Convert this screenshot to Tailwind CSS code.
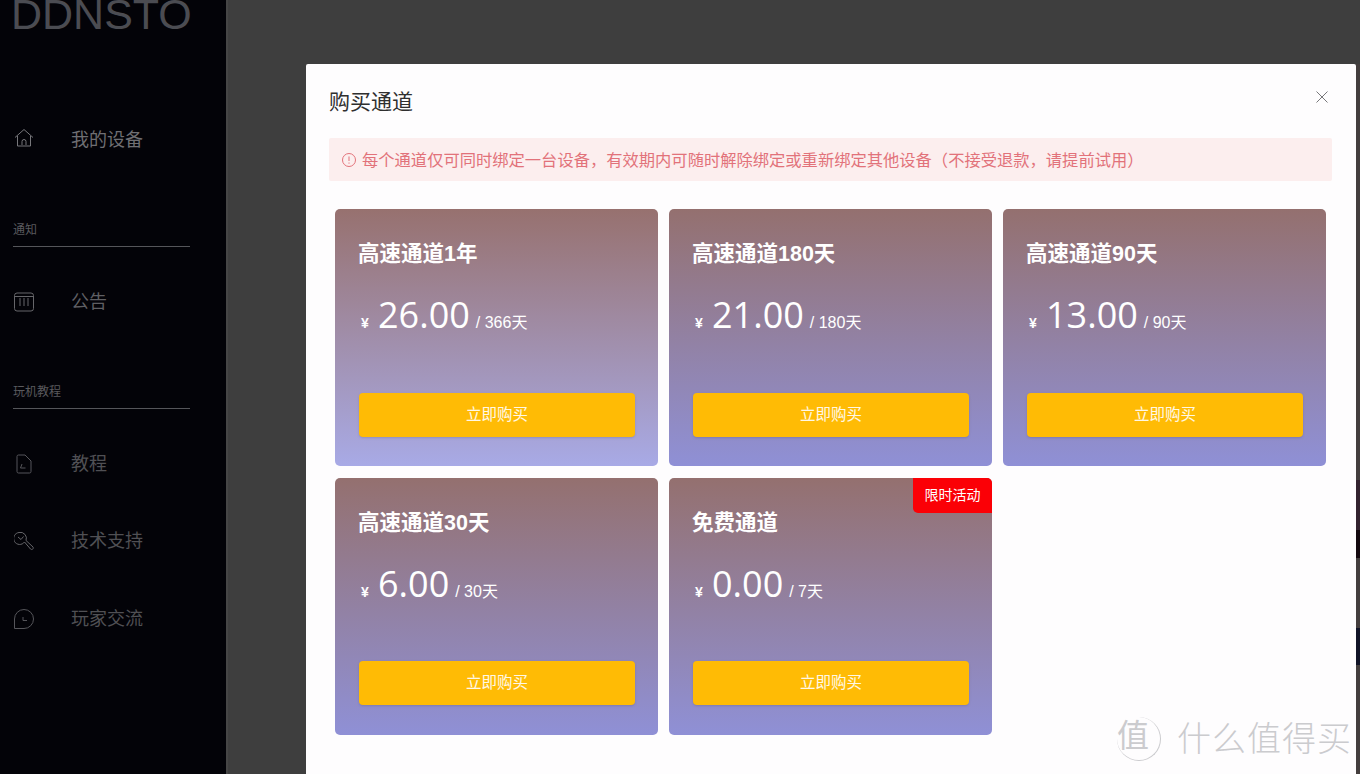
<!DOCTYPE html>
<html lang="zh-CN">
  <head>
    <meta charset="UTF-8" />
    <title>DDNSTO</title>
    <script src="https://cdn.jsdelivr.net/npm/@tailwindcss/browser@4"></script>
  </head>
  <body class="h-screen overflow-hidden bg-[#3e3e3e] font-['Liberation_Sans','Noto_Sans_CJK_SC',sans-serif]">
    <div class="flex h-[774px]">
      <!-- sidebar -->
      <aside class="w-[226px] shrink-0 bg-[#030308] pl-[13px] pr-9 text-[#5b5b60]">
        <div class="h-[30px] -mt-[9px] -ml-[2px] text-[43px] leading-[46px] text-[#4b4c52] whitespace-nowrap">DDNSTO</div>

        <div class="mt-[94px] flex h-[50px] items-center">
          <svg class="w-5 h-5 mb-[4px] mr-[37px] ml-[1px] shrink-0" viewBox="0 0 20 20" fill="none" stroke="#77777b" stroke-width="1">
            <path d="M1 9.500 10 1.500l9 8M3.500 8v10h13V8M8 17v-3.500a2 2 0 0 1 4 0V17" />
          </svg>
          <span class="text-[18px] text-[#6f6f73]">我的设备</span>
        </div>

        <div class="mt-[53px] h-[29px] pt-[2px] border-b border-[#55565a] text-[12px] leading-[20px] text-[#5a5a5e]">通知</div>

        <div class="mt-[30px] flex h-[50px] items-center">
          <svg class="w-5 h-5 mr-[37px] ml-[1px] shrink-0" viewBox="0 0 20 20" fill="none" stroke="#66666a" stroke-width="1">
            <rect x="0.5" y="1" width="19" height="18" rx="2.500" />
            <path d="M6 6v8M10 6v8M14 6v8M1 4.500h18" />
          </svg>
          <span class="text-[18px] text-[#5f5f63]">公告</span>
        </div>

        <div class="mt-[53px] h-[29px] pt-[2px] border-b border-[#55565a] text-[12px] leading-[20px] text-[#5a5a5e]">玩机教程</div>

        <div class="mt-[30px] flex h-[50px] items-center">
          <svg class="w-5 h-5 mr-[37px] ml-[1px] shrink-0" viewBox="0 0 20 20" fill="none" stroke="#55555a" stroke-width="1">
            <path d="M3 2.500a1.500 1.500 0 0 1 1.500-1.500H11l6 6v10.500a1.500 1.500 0 0 1-1.500 1.500h-11A1.500 1.500 0 0 1 3 17.500zM8 10l-1.500 4h5" />
          </svg>
          <span class="text-[18px] text-[#505054]">教程</span>
        </div>

        <div class="mt-[27px] flex h-[50px] items-center">
          <svg class="w-5 h-5 mr-[37px] ml-[1px] shrink-0" viewBox="0 0 20 20" fill="none" stroke="#66666a" stroke-width="1">
            <path d="M5 1.500a6 6 0 1 0 5.500 9.500l6 7c1.500 1.500 3.500-.5 2.500-2l-7-6.500A6 6 0 0 0 5 1.500ZM4 6l3 2.500 2.500-3" />
          </svg>
          <span class="text-[18px] text-[#505054]">技术支持</span>
        </div>

        <div class="mt-[28px] flex h-[50px] items-center">
          <svg class="w-5 h-5 mr-[37px] ml-[1px] shrink-0" viewBox="0 0 20 20" fill="none" stroke="#55555a" stroke-width="1">
            <path d="M10 .5a9.500 9.500 0 1 1 0 19H.5V10A9.500 9.500 0 0 1 10 .5ZM9 8v3.500h4" />
          </svg>
          <span class="text-[18px] text-[#505054]">玩家交流</span>
        </div>
      </aside>

      <main class="flex-1 relative border-l-2 border-[#464646]">
        <!-- right edge of the page behind the dialog -->
        <div class="absolute right-0 top-[64px] w-1 h-[710px] bg-[#443e3e]"></div>
        <div class="absolute right-0 top-[480px] w-1 h-[50px] bg-[#33232f]"></div>
        <div class="absolute right-0 top-[530px] w-1 h-[28px] bg-[#14090f]"></div>
        <div class="absolute right-0 top-[628px] w-1 h-[37px] bg-[#111427]"></div>

        <!-- dialog -->
        <div class="absolute left-[78px] top-[64px] w-[1050px] h-[720px] bg-[#fefdfe] rounded-t-[2px] pl-[23px] pr-6">
          <div class="h-[74px] flex items-center justify-between">
            <h2 class="text-[21px] text-[#2f2f2f] mt-[2px]">购买通道</h2>
            <svg class="w-3 h-3 mr-1 mb-[8px]" viewBox="0 0 12 12" fill="none" stroke="#77777a" stroke-width="1">
              <path d="M.5.5 11.500 11.500M11.500.5 .5 11.500" />
            </svg>
          </div>

          <div class="h-[43px] bg-[#fceeee] rounded-[2px] flex items-center px-[13px] pt-[1px] text-[#e2727a] text-[16.3px] whitespace-nowrap">
            <svg class="w-[14px] h-[14px] mr-[6px] shrink-0" viewBox="0 0 14 14" fill="none" stroke="#e2727a" stroke-width="1">
              <circle cx="7" cy="7" r="6.500" />
              <path d="M7 3.500v4.500M7 9.500v1.200" />
            </svg>
            每个通道仅可同时绑定一台设备，有效期内可随时解除绑定或重新绑定其他设备（不接受退款，请提前试用）
          </div>

          <div class="mt-[28px] px-[6px] grid grid-cols-[323px_323px_323px] gap-x-[11px] gap-y-[12px]">
            <!-- card 1 -->
            <div class="relative h-[257px] rounded-[5px] bg-gradient-to-b from-[#97716f] to-[#a8aae6] p-6 text-white">
              <h3 class="text-[21.5px] leading-[30px] font-bold mt-[6px] -ml-[1px]">高速通道1年</h3>
              <p class="mt-[22px] flex items-baseline h-[48px] whitespace-nowrap">
                <span class="text-[14px] font-bold w-[19px] pl-[2px]">¥</span>
                <span class="text-[36px] leading-[48px] font-['Open_Sans','Liberation_Sans',sans-serif]">26.00</span>
                <span class="text-[16px] ml-[6px]">/ 366天</span>
              </p>
              <button class="mt-[54px] w-[276px] h-[44px] rounded-[4px] bg-[#ffbb05] text-[15.5px] text-white/90 shadow-sm">立即购买</button>
            </div>
            <!-- card 2 -->
            <div class="relative h-[257px] rounded-[5px] bg-gradient-to-b from-[#94706f] to-[#8f90d6] p-6 text-white">
              <h3 class="text-[21.5px] leading-[30px] font-bold mt-[6px] -ml-[1px]">高速通道180天</h3>
              <p class="mt-[22px] flex items-baseline h-[48px] whitespace-nowrap">
                <span class="text-[14px] font-bold w-[19px] pl-[2px]">¥</span>
                <span class="text-[36px] leading-[48px] font-['Open_Sans','Liberation_Sans',sans-serif]">21.00</span>
                <span class="text-[16px] ml-[6px]">/ 180天</span>
              </p>
              <button class="mt-[54px] w-[276px] h-[44px] rounded-[4px] bg-[#ffbb05] text-[15.5px] text-white/90 shadow-sm">立即购买</button>
            </div>
            <!-- card 3 -->
            <div class="relative h-[257px] rounded-[5px] bg-gradient-to-b from-[#94706f] to-[#8f90d6] p-6 text-white">
              <h3 class="text-[21.5px] leading-[30px] font-bold mt-[6px] -ml-[1px]">高速通道90天</h3>
              <p class="mt-[22px] flex items-baseline h-[48px] whitespace-nowrap">
                <span class="text-[14px] font-bold w-[19px] pl-[2px]">¥</span>
                <span class="text-[36px] leading-[48px] font-['Open_Sans','Liberation_Sans',sans-serif]">13.00</span>
                <span class="text-[16px] ml-[6px]">/ 90天</span>
              </p>
              <button class="mt-[54px] w-[276px] h-[44px] rounded-[4px] bg-[#ffbb05] text-[15.5px] text-white/90 shadow-sm">立即购买</button>
            </div>
            <!-- card 4 -->
            <div class="relative h-[257px] rounded-[5px] bg-gradient-to-b from-[#94706f] to-[#8f90d6] p-6 text-white">
              <h3 class="text-[21.5px] leading-[30px] font-bold mt-[6px] -ml-[1px]">高速通道30天</h3>
              <p class="mt-[22px] flex items-baseline h-[48px] whitespace-nowrap">
                <span class="text-[14px] font-bold w-[19px] pl-[2px]">¥</span>
                <span class="text-[36px] leading-[48px] font-['Open_Sans','Liberation_Sans',sans-serif]">6.00</span>
                <span class="text-[16px] ml-[6px]">/ 30天</span>
              </p>
              <button class="mt-[53px] w-[276px] h-[44px] rounded-[4px] bg-[#ffbb05] text-[15.5px] text-white/90 shadow-sm">立即购买</button>
            </div>
            <!-- card 5 -->
            <div class="relative h-[257px] rounded-[5px] bg-gradient-to-b from-[#94706f] to-[#8f90d6] p-6 text-white">
              <span class="absolute right-0 top-0 w-[79px] h-[35px] rounded-tr-[5px] rounded-bl-[5px] bg-[#fb0006] text-[14px] leading-[35px] text-center">限时活动</span>
              <h3 class="text-[21.5px] leading-[30px] font-bold mt-[6px] -ml-[1px]">免费通道</h3>
              <p class="mt-[22px] flex items-baseline h-[48px] whitespace-nowrap">
                <span class="text-[14px] font-bold w-[19px] pl-[2px]">¥</span>
                <span class="text-[36px] leading-[48px] font-['Open_Sans','Liberation_Sans',sans-serif]">0.00</span>
                <span class="text-[16px] ml-[6px]">/ 7天</span>
              </p>
              <button class="mt-[53px] w-[276px] h-[44px] rounded-[4px] bg-[#ffbb05] text-[15.5px] text-white/90 shadow-sm">立即购买</button>
            </div>
          </div>
        </div>

        <!-- watermark over the picture -->
        <div class="absolute right-[8px] bottom-[13px] flex items-center text-[#cbcbce]">
          <span class="w-[44px] h-[44px] rounded-full border-r border-b border-[#cbcbce] text-[32px] leading-[38px] mr-[16px]">值</span>
          <span class="text-[34px] leading-[40px] font-light tracking-[1px]">什么值得买</span>
        </div>
      </main>
    </div>
  </body>
</html>
